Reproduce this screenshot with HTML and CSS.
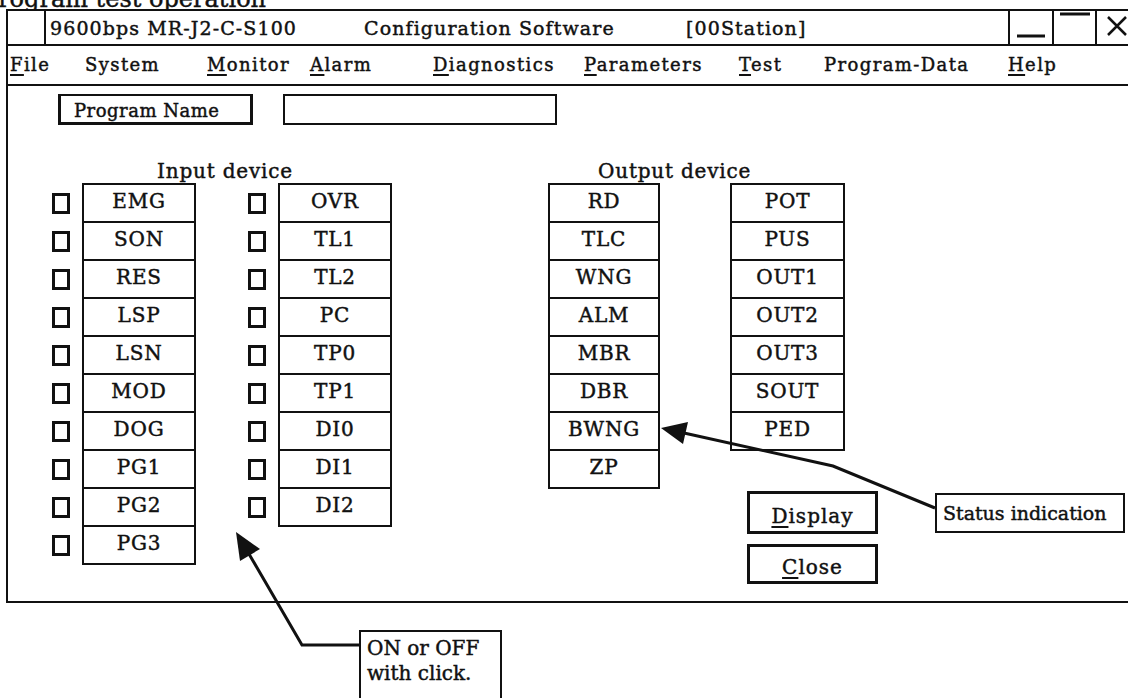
FILE: index.html
```html
<!DOCTYPE html>
<html lang="en">
<head>
    <meta charset="UTF-8">
    <title>Program test operation</title>
    <link rel="stylesheet" href="styles.css">
</head>
<body>
    <div class="caption">Program test operation</div>

    <!-- Ventana principal -->
    <div class="window">
        <div class="titlebar">
            <div class="tb-icon"></div>
            <div class="tb-title">
                <span class="tb-port">9600bps MR-J2-C-S100</span>
                <span class="tb-app">Configuration Software</span>
                <span class="tb-station">[00Station]</span>
            </div>
            <div class="tb-btn tb-min">
                <svg width="42" height="33"><line x1="7" y1="25" x2="35" y2="25" stroke="#111" stroke-width="3"/></svg>
            </div>
            <div class="tb-btn tb-max">
                <svg width="41" height="33"><line x1="6" y1="3" x2="36" y2="3" stroke="#111" stroke-width="3"/></svg>
            </div>
            <div class="tb-btn tb-close">
                <svg width="33" height="33"><path d="M11 6 L29 24 M29 6 L11 24" stroke="#111" stroke-width="2.5"/></svg>
            </div>
        </div>

        <div class="menubar">
            <span><u>F</u>ile</span>
            <span>System</span>
            <span><u>M</u>onitor</span>
            <span><u>A</u>larm</span>
            <span><u>D</u>iagnostics</span>
            <span><u>P</u>arameters</span>
            <span><u>T</u>est</span>
            <span>Program-Data</span>
            <span><u>H</u>elp</span>
        </div>

        <div class="content">
            <div class="prog-row">
                <div class="prog-label">Program Name</div>
                <div class="prog-input"></div>
            </div>

            <div class="devices">
                <!-- Entradas -->
                <div class="group input-group">
                    <div class="group-title">Input device</div>
                    <div class="cols">
                        <div class="col">
                            <div class="row"><span class="check"></span><span class="cell">EMG</span></div>
                            <div class="row"><span class="check"></span><span class="cell">SON</span></div>
                            <div class="row"><span class="check"></span><span class="cell">RES</span></div>
                            <div class="row"><span class="check"></span><span class="cell">LSP</span></div>
                            <div class="row"><span class="check"></span><span class="cell">LSN</span></div>
                            <div class="row"><span class="check"></span><span class="cell">MOD</span></div>
                            <div class="row"><span class="check"></span><span class="cell">DOG</span></div>
                            <div class="row"><span class="check"></span><span class="cell">PG1</span></div>
                            <div class="row"><span class="check"></span><span class="cell">PG2</span></div>
                            <div class="row"><span class="check"></span><span class="cell">PG3</span></div>
                        </div>
                        <div class="col col-2">
                            <div class="row"><span class="check"></span><span class="cell">OVR</span></div>
                            <div class="row"><span class="check"></span><span class="cell">TL1</span></div>
                            <div class="row"><span class="check"></span><span class="cell">TL2</span></div>
                            <div class="row"><span class="check"></span><span class="cell">PC</span></div>
                            <div class="row"><span class="check"></span><span class="cell">TP0</span></div>
                            <div class="row"><span class="check"></span><span class="cell">TP1</span></div>
                            <div class="row"><span class="check"></span><span class="cell">DI0</span></div>
                            <div class="row"><span class="check"></span><span class="cell">DI1</span></div>
                            <div class="row"><span class="check"></span><span class="cell">DI2</span></div>
                        </div>
                    </div>
                </div>

                <!-- Salidas -->
                <div class="group output-group">
                    <div class="group-title">Output device</div>
                    <div class="cols">
                        <div class="col out-1">
                            <div class="row"><span class="cell">RD</span></div>
                            <div class="row"><span class="cell">TLC</span></div>
                            <div class="row"><span class="cell">WNG</span></div>
                            <div class="row"><span class="cell">ALM</span></div>
                            <div class="row"><span class="cell">MBR</span></div>
                            <div class="row"><span class="cell">DBR</span></div>
                            <div class="row"><span class="cell">BWNG</span></div>
                            <div class="row"><span class="cell">ZP</span></div>
                        </div>
                        <div class="col out-2">
                            <div class="row"><span class="cell">POT</span></div>
                            <div class="row"><span class="cell">PUS</span></div>
                            <div class="row"><span class="cell">OUT1</span></div>
                            <div class="row"><span class="cell">OUT2</span></div>
                            <div class="row"><span class="cell">OUT3</span></div>
                            <div class="row"><span class="cell">SOUT</span></div>
                            <div class="row"><span class="cell">PED</span></div>
                        </div>
                    </div>
                    <div class="buttons">
                        <div class="btn btn-display"><u>D</u>isplay</div>
                        <div class="btn btn-close"><u>C</u>lose</div>
                    </div>
                </div>
            </div>
        </div>
    </div>

    <!-- Flechas de anotación -->
    <svg class="arrows" width="1128" height="698">
        <polyline points="935,508 833,466 684,433" fill="none" stroke="#111" stroke-width="3"/>
        <polygon points="661,428 688,422 683,444" fill="#111"/>
        <polyline points="359,645 302,645 249,554" fill="none" stroke="#111" stroke-width="3"/>
        <polygon points="236,532 260,549 240,561" fill="#111"/>
    </svg>

    <div class="callout callout-status">Status indication</div>
    <div class="callout callout-click">ON or OFF<br>with click.</div>
</body>
</html>
```

FILE: styles.css
```css
body {
    margin: 0;
    width: 1128px;
    height: 698px;
    overflow: hidden;
    position: relative;
    background-color: #fff;
    color: #111;
    font-family: "DejaVu Serif", serif;
    -webkit-text-stroke: 0.45px #111;
}

u {
    text-decoration-thickness: 2px;
    text-underline-offset: 3px;
}

.caption {
    height: 22px;
    margin-top: -13px;
    margin-left: -18px;
    font-size: 24px;
    line-height: 24px;
    white-space: nowrap;
}

.window {
    position: relative;
    width: 1140px;
    margin-left: 6px;
    border: 2px solid #111;
    background-color: #fff;
}

/* Barra de título */
.titlebar {
    display: flex;
    height: 33px;
    border-bottom: 2px solid #111;
}

.tb-icon {
    width: 36px;
    border-right: 2px solid #111;
}

.tb-title {
    display: flex;
    width: 958px;
    padding-left: 4px;
    padding-top: 4px;
    font-size: 19px;
    line-height: 27px;
    letter-spacing: 1.1px;
    white-space: nowrap;
}

.tb-port {
    width: 314px;
}

.tb-app {
    width: 322px;
}

.tb-btn {
    border-left: 2px solid #111;
}

.tb-min {
    width: 42px;
}

.tb-max {
    width: 41px;
}

.tb-close {
    width: 40px;
}

/* Menú */
.menubar {
    display: grid;
    grid-template-columns: 75px 122px 103px 123px 151px 155px 85px 184px 1fr;
    height: 38px;
    padding-left: 2px;
    border-bottom: 2px solid #111;
    font-size: 18px;
    line-height: 38px;
    letter-spacing: 1.4px;
    white-space: nowrap;
}

/* Contenido */
.content {
    height: 515px;
    padding-top: 8px;
    box-sizing: border-box;
}

.prog-row {
    display: flex;
    height: 31px;
}

.prog-label {
    width: 195px;
    margin-left: 50px;
    padding-left: 13px;
    padding-top: 3px;
    border: 2px solid #111;
    border-width: 2px 3px 3px 3px;
    box-sizing: border-box;
    font-size: 18px;
    line-height: 24px;
    letter-spacing: 0.5px;
}

.prog-input {
    width: 274px;
    margin-left: 30px;
    border: 2px solid #111;
    box-sizing: border-box;
}

.devices {
    display: flex;
    margin-top: 36px;
}

.group-title {
    height: 20px;
    margin-bottom: 2px;
    font-size: 20px;
    line-height: 20px;
    letter-spacing: 0.8px;
    white-space: nowrap;
}

.input-group {
    margin-left: 44px;
}

.input-group .group-title {
    margin-left: 105px;
}

.output-group {
    margin-left: 156px;
}

.output-group .group-title {
    margin-left: 50px;
}

.cols {
    display: flex;
}

.col-2 {
    margin-left: 52px;
}

.row {
    display: flex;
    align-items: center;
    gap: 12px;
    height: 40px;
}

.row + .row {
    margin-top: -2px;
}

.check {
    width: 18px;
    height: 21px;
    border: 3px solid #111;
    box-sizing: border-box;
}

.cell {
    width: 114px;
    height: 40px;
    border: 2px solid #111;
    box-sizing: border-box;
    text-align: center;
    font-size: 20px;
    line-height: 32px;
    letter-spacing: 0.8px;
}

.out-1 .cell {
    width: 112px;
}

.out-2 {
    margin-left: 70px;
}

.out-2 .cell {
    width: 115px;
}

.buttons {
    margin-left: 199px;
    margin-top: 2px;
}

.btn {
    display: flex;
    align-items: center;
    justify-content: center;
    width: 131px;
    border: 3px solid #111;
    box-sizing: border-box;
    font-size: 20px;
    letter-spacing: 1px;
}

.btn-display {
    height: 43px;
    padding-top: 6px;
}

.btn-close {
    height: 40px;
    margin-top: 10px;
    padding-top: 6px;
}

/* Anotaciones */
.arrows {
    position: absolute;
    left: 0;
    top: 0;
    pointer-events: none;
}

.callout {
    position: absolute;
    border: 2px solid #111;
    background-color: #fff;
    box-sizing: border-box;
    white-space: nowrap;
}

.callout-status {
    left: 935px;
    top: 493px;
    width: 190px;
    height: 40px;
    padding-left: 6px;
    font-size: 19px;
    line-height: 36px;
}

.callout-click {
    left: 359px;
    top: 630px;
    width: 143px;
    height: 80px;
    padding: 4px 0 0 6px;
    font-size: 20px;
    line-height: 25px;
}
```
